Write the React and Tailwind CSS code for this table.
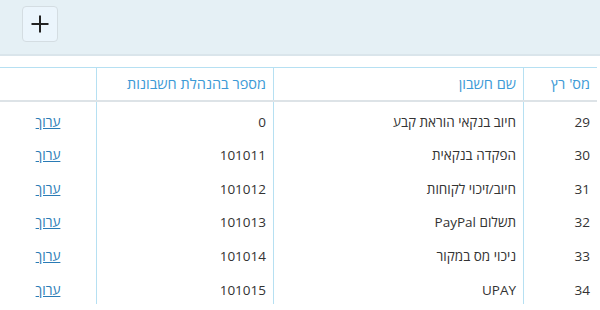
import React from "react";

const rows = [
  { id: 29, name: "חיוב בנקאי הוראת קבע", code: "0" },
  { id: 30, name: "הפקדה בנקאית", code: "101011" },
  { id: 31, name: "חיוב/זיכוי לקוחות", code: "101012" },
  { id: 32, name: "תשלום PayPal", code: "101013" },
  { id: 33, name: "ניכוי מס במקור", code: "101014" },
  { id: 34, name: "UPAY", code: "101015" },
];

const font = { fontFamily: '"Open Sans", "Liberation Sans", "DejaVu Sans", sans-serif' };

export default function App() {
  return (
    <div className="w-[600px] h-[310px] overflow-hidden bg-white text-[13.5px]" style={font}>
      {/* toolbar */}
      <div className="h-[56px] bg-[#e5f0f5] border-b-2 border-[#dae5eb] pl-[22px] pt-[6px]">
        <button className="w-[36px] h-[36px] rounded-[4px] border border-[#d4dde2] bg-[#ebf5fc] flex items-center justify-center">
          <svg width="20" height="20" viewBox="0 0 20 20">
            <path d="M10 1.5v17M1.5 10h17" stroke="#222" strokeWidth="2" />
          </svg>
        </button>
      </div>

      {/* accounts table */}
      <div dir="rtl" className="mt-[11px] w-[597px] border-t border-[#b6e0f2]">
        <div className="flex h-[34px] border-b-2 border-[#dde3e7] text-[#3d9ad6] text-[14.5px]">
          <div className="w-[74px] border-l border-[#b6e0f2] pr-[7px] flex items-center">מס' רץ</div>
          <div className="w-[250px] border-l border-[#b6e0f2] pr-[7px] flex items-center">שם חשבון</div>
          <div className="w-[177px] border-l border-[#b6e0f2] pr-[7px] flex items-center">מספר בהנהלת חשבונות</div>
          <div className="flex-1"></div>
        </div>
        {rows.map((r) => (
          <div key={r.id} className="flex h-[33.6px] text-[#333]">
            <div className="w-[74px] border-l border-[#b6e0f2] pr-[7px] pt-[6px] flex items-center">{r.id}</div>
            <div className="w-[250px] border-l border-[#b6e0f2] pr-[7px] pt-[6px] flex items-center">{r.name}</div>
            <div className="w-[177px] border-l border-[#b6e0f2] pr-[7px] pt-[6px] flex items-center">{r.code}</div>
            <div className="flex-1 pt-[6px] flex items-center justify-center">
              <a href="#" className="text-[#2a7bb5] underline">ערוך</a>
            </div>
          </div>
        ))}
      </div>
    </div>
  );
}
